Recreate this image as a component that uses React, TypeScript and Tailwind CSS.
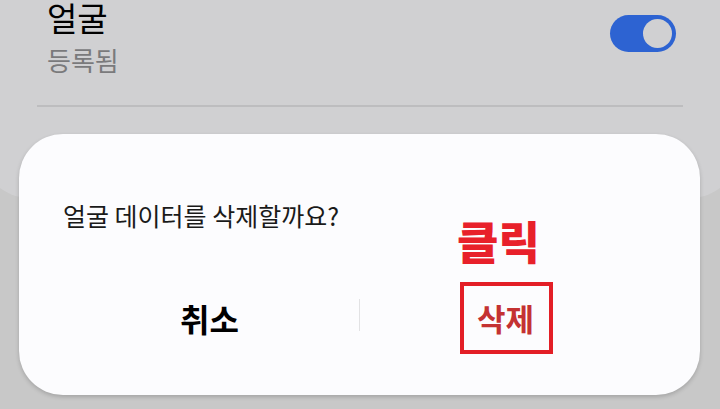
const font = { fontFamily: '"Noto Sans CJK KR", "Noto Sans", sans-serif' };

function Toggle() {
  return (
    <span className="flex h-[37px] w-[66px] items-center justify-end rounded-full bg-[#2d63d2] pr-[4px]">
      <span className="h-[29px] w-[29px] rounded-full bg-[#d0d0d2]" />
    </span>
  );
}

export default function App() {
  return (
    <div
      className="relative h-[409px] w-[720px] overflow-hidden bg-[#c8c8c8]"
      style={font}
    >
      <div className="-mx-[20px] h-[198px] rounded-b-[50px] bg-[#d0d0d2] px-[57px]">
        <div className="flex items-start justify-between pl-[10px]">
          <div className="-mt-[6px]">
            <div className="text-[33px] leading-[46px] text-black">얼굴</div>
            <div className="mt-[2px] text-[26px] leading-[36px] text-[#7a7a7c]">등록됨</div>
          </div>
          <div className="mr-[7px] mt-[15px]">
            <Toggle />
          </div>
        </div>
        <div className="mt-[27px] h-[2px] bg-[#bdbdbf]" />
      </div>

      <div className="absolute left-[19px] top-[134px] h-[261px] w-[681px] rounded-[44px] bg-[#fcfcfe] px-[41px] shadow-[0_2px_4px_rgba(0,0,0,0.18)]">
        <p className="pl-[3px] pt-[63px] text-[25px] leading-[36px] text-[#1a1a1a]">
          얼굴 데이터를 삭제할까요?
        </p>
        <div className="mt-[63px] grid grid-cols-[1fr_1px_1fr] items-center">
          <button className="text-[32px] font-bold leading-[44px] text-black">취소</button>
          <span className="-mt-[6px] h-[32px] w-px bg-[#e2e2e4]" />
          <button className="pr-[8px] text-[31px] font-bold leading-[44px] text-[#c43232]">삭제</button>
        </div>
      </div>

      <span className="absolute left-[457px] top-[211px] text-[45px] font-black leading-[60px] text-[#e8202a]">
        클릭
      </span>
      <span className="absolute left-[460px] top-[282px] h-[72px] w-[93px] border-[4px] border-[#e31e26]" />
    </div>
  );
}
